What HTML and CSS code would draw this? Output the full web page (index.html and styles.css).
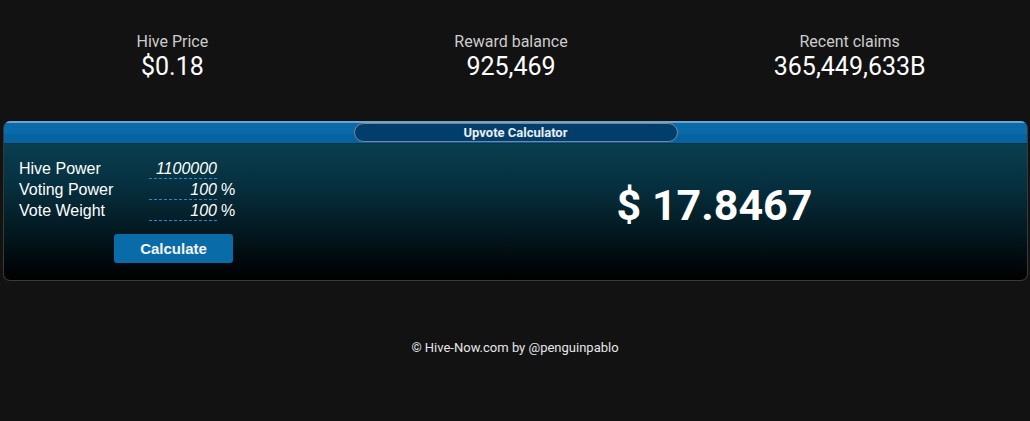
FILE: index.html
```html
<!DOCTYPE html>
<html>
<head>
<meta charset="utf8">
<title>Hive-Now</title>
<link rel="stylesheet" href="styles.css">
</head>
<body>
<div class="stats">
	<div class="stat">
		<div class="stat-label">Hive Price</div>
		<div class="stat-value">$0.18</div>
	</div>
	<div class="stat">
		<div class="stat-label">Reward balance</div>
		<div class="stat-value">925,469</div>
	</div>
	<div class="stat">
		<div class="stat-label">Recent claims</div>
		<div class="stat-value">365,449,633B</div>
	</div>
</div>

<div class="panel">
	<div class="panel-head">
		<div class="panel-title">Upvote Calculator</div>
	</div>
	<div class="panel-body">
		<div class="calc-form">
			<div class="calc-row">
				<span class="calc-label">Hive Power</span>
				<span class="calc-input">1100000</span>
			</div>
			<div class="calc-row">
				<span class="calc-label">Voting Power</span>
				<span class="calc-input">100</span><span class="calc-unit">%</span>
			</div>
			<div class="calc-row">
				<span class="calc-label">Vote Weight</span>
				<span class="calc-input">100</span><span class="calc-unit">%</span>
			</div>
			<div class="calc-action">
				<button class="calc-btn">Calculate</button>
			</div>
		</div>
		<div class="calc-result">$ 17.8467</div>
	</div>
</div>

<div class="footer">&copy; Hive-Now.com by @penguinpablo</div>
</body>
</html>
```

FILE: styles.css
```css
body{
margin:0;
background:#121212;
color:#fff;
font-family:Roboto, "Liberation Sans", sans-serif;
}
.stats{
display:flex;
padding:32px 11px 0 3px;
height:89px;
box-sizing:border-box;
}
.stat{
flex:1;
text-align:center;
}
.stat-label{
font-size:16px;
line-height:19px;
color:#ccc;
}
.stat-value{
font-size:25px;
line-height:28px;
margin-top:2px;
}
.panel{
margin:32px 2px 0 3px;
height:160px;
box-sizing:border-box;
border:1px solid #3a3a3a;
border-top:none;
border-radius:7px;
overflow:hidden;
background:linear-gradient(#0b4659, #06303f 40%, #000 100%);
display:flex;
flex-direction:column;
}
.panel-head{
height:20px;
border-top:2px solid #6ea5cf;
border-bottom:1px solid #06324a;
background:linear-gradient(#0a6aaa 55%, #0762a0 55%);
display:flex;
justify-content:center;
}
.panel-title{
width:324px;
height:19px;
box-sizing:border-box;
border:1px solid #7c8792;
border-radius:10px;
background:#023e6c;
text-align:center;
font-size:13px;
font-weight:bold;
line-height:17px;
color:#e8eef3;
}
.panel-body{
flex:1;
display:flex;
}
.calc-form{
width:398px;
padding:15px 0 0 15px;
box-sizing:border-box;
font-family:"Liberation Sans", Arial, sans-serif;
font-size:16px;
}
.calc-row{
display:flex;
height:21px;
line-height:19px;
}
.calc-label{
width:130px;
}
.calc-input{
width:68px;
height:19px;
text-align:right;
font-style:italic;
border-bottom:1px dashed #2a86d8;
}
.calc-unit{
margin-left:4px;
}
.calc-action{
padding:12px 0 0 95px;
}
.calc-btn{
width:119px;
height:29px;
border:none;
border-radius:3px;
background:#0a6ba9;
color:#f4f4f4;
font-family:"Liberation Sans", Arial, sans-serif;
font-size:15px;
font-weight:bold;
}
.calc-result{
flex:1;
display:flex;
align-items:center;
justify-content:center;
padding-bottom:14px;
font-size:43px;
font-weight:bold;
}
.footer{
margin-top:59px;
text-align:center;
font-size:13px;
color:#e6e6e6;
}
```
